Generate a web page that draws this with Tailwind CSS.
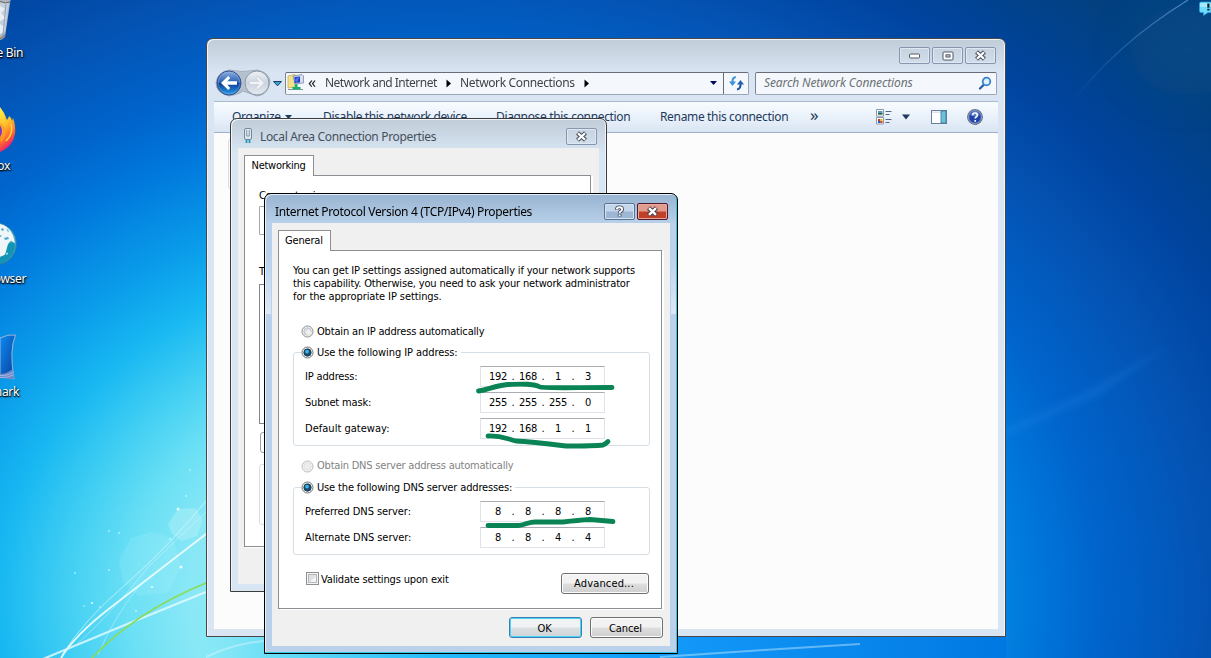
<!DOCTYPE html>
<html lang="en">
<head>
<meta charset="utf-8">
<title>Network Connections</title>
<script src="https://cdn.jsdelivr.net/npm/@tailwindcss/browser@4"></script>
</head>
<body class="overflow-hidden">
<div class="relative w-[1211px] h-[658px] overflow-hidden font-['Noto_Sans','Open_Sans',sans-serif] text-[12px] tracking-[-0.34px] text-black whitespace-nowrap">

  <!-- wallpaper -->
  <svg class="absolute inset-0" width="1211" height="658" viewBox="0 0 1211 658">
    <defs>
      <radialGradient id="sky" gradientUnits="userSpaceOnUse" cx="0" cy="0" r="800" gradientTransform="translate(430 600) scale(1.25 1)">
        <stop offset="0" stop-color="#9ceef8"/><stop offset=".24" stop-color="#8ae8f6"/><stop offset=".3" stop-color="#6ce0f5"/>
        <stop offset=".36" stop-color="#44d0f3"/><stop offset=".43" stop-color="#18b8f2"/><stop offset=".5" stop-color="#0a9cea"/>
        <stop offset=".6" stop-color="#0078dc"/><stop offset=".67" stop-color="#0064cc"/><stop offset=".785" stop-color="#0452b2"/>
        <stop offset=".87" stop-color="#0044a0"/><stop offset="1" stop-color="#024080"/>
      </radialGradient>
      <linearGradient id="floor" x1="0" x2="1"><stop offset="0" stop-color="#78e4f6" stop-opacity="0"/><stop offset=".08" stop-color="#6fdff6"/><stop offset=".3" stop-color="#24baf9"/><stop offset=".6" stop-color="#1298f8"/><stop offset="1" stop-color="#0078e2"/></linearGradient>
      <linearGradient id="beam" x1="0" y1="1" x2="1" y2="0"><stop offset="0" stop-color="#4090e0" stop-opacity="0"/><stop offset="1" stop-color="#6aa4d8" stop-opacity=".7"/></linearGradient>
      <filter id="soft"><feGaussianBlur stdDeviation=".6"/></filter>
      <filter id="blur3"><feGaussianBlur stdDeviation="3"/></filter>
      <filter id="haze" x="-50%" y="-50%" width="200%" height="200%"><feGaussianBlur stdDeviation="18"/></filter>
    </defs>
    <rect width="1211" height="658" fill="url(#sky)"/>
    <rect x="200" y="637" width="806" height="21" fill="url(#floor)"/>
    <ellipse cx="1190" cy="50" rx="60" ry="45" fill="#0e5088" opacity=".5" filter="url(#haze)"/>
    <path d="M1070 105Q1115 45 1188 0" fill="none" stroke="url(#beam)" stroke-width="1.3" filter="url(#soft)"/>
    <path d="M1000 430L1080 394L1170 345L1100 395L1000 440Z" fill="#2c8ce8" opacity=".2" filter="url(#blur3)"/>
    <g fill="#d8fafc" opacity=".28" filter="url(#soft)"><path d="M168 524l10-15 17-1 8 12-6 16-15 5-10-7z"/><path d="M119 560l12-22 20-6 22 6 8 28-12 26-30 4-16-14z" opacity=".4"/></g>
    <g fill="none" stroke="#e6fbff" filter="url(#soft)">
      <path d="M61 658Q75 635 110 608L206 534" stroke-width="1.8"/>
      <path d="M62 655Q84 620 125 585Q170 545 206 501" opacity=".6"/>
      <path d="M76 645Q110 615 150 565L206 512" opacity=".4"/>
      <path d="M98 655Q112 620 140 585" opacity=".4"/>
      <path d="M43 659L120 627L206 592" stroke-width="2.2" opacity=".8"/>
      <path d="M206 657Q235 643 264 641" opacity=".4" stroke-width="2"/>
      <path d="M660 657Q760 650 860 644" opacity=".4" stroke-width="2"/>
    </g>
    <path d="M91 659Q135 612 206 583" fill="none" stroke="#88dc58" stroke-width="1.6"/>
    <g fill="#e8ffff"><circle cx="178" cy="509" r="1.5"/><circle cx="181" cy="567" r="1.5"/><circle cx="92" cy="603" r="1"/><circle cx="152" cy="587" r="1"/><circle cx="109" cy="531" r=".8"/><circle cx="119" cy="533" r=".8"/><circle cx="170" cy="539" r=".8"/><circle cx="75" cy="573" r=".8"/><circle cx="109" cy="570" r=".8"/><circle cx="136" cy="611" r=".8"/><circle cx="84" cy="606" r=".7"/><circle cx="100" cy="607" r=".7"/><circle cx="186" cy="496" r=".8"/><circle cx="190" cy="470" r=".7"/></g>
  </svg>

  <!-- desktop shortcuts -->
  <svg class="absolute left-0 top-0" width="40" height="400" viewBox="0 0 40 400">
    <defs>
      <linearGradient id="fx" x1="0" y1="0" x2=".3" y2="1"><stop offset="0" stop-color="#fff44a"/><stop offset=".45" stop-color="#ffc02c"/><stop offset=".75" stop-color="#ff6a30"/><stop offset="1" stop-color="#e81478"/></linearGradient>
      <linearGradient id="fin" x1="0" y1="0" x2="1" y2="1"><stop offset="0" stop-color="#0c8cf4"/><stop offset="1" stop-color="#0a3c98"/></linearGradient>
      <linearGradient id="globe" x1="0" y1="0" x2="0" y2="1"><stop offset="0" stop-color="#7ccce4"/><stop offset="1" stop-color="#1490b8"/></linearGradient>
    </defs>
    <path d="M0 0H10.500L5 37Q3 39.500 0 40Z" fill="#a9b6c4"/><path d="M0 2L9 3L5 32L0 35Z" fill="#c4d0dc"/><path d="M0 6l5 3-4 4 5 5-6 3zM0 24l5 3-3 6-2 1z" fill="#e8eef4"/><path d="M6 4L3 35" stroke="#8fa4b8" fill="none"/><path d="M0 1.500Q6 4 10 2" stroke="#706458" fill="none"/><path d="M0 38.500Q3 38 5 35" stroke="#8c7c6c" fill="none" stroke-width="1.500"/>
    <path d="M0 107Q5 113 7 120Q9 117 9 116Q12 118 12 121L13 118Q16 126 15 134Q13 147 0 152Z" fill="url(#fx)"/><path d="M0 125Q4 131 0 137Z" fill="#7838c8"/><path d="M0 124Q8 131 1 141" stroke="#ffa020" fill="none" stroke-width="2"/><path d="M11 124Q14 133 6 141" stroke="#ffd83c" fill="none" stroke-width="1.500"/>
    <path d="M0 223.500A21 21 0 0 1 0 264.500Z" fill="url(#globe)"/><path d="M0 223.500Q12 227 15 243L11 241L8 244L11 249L8 252L3 256L0 257Z" fill="#eef6f8"/><path d="M1 229l2-1 1 2-2 1zM4 238l4-1 1 2-4 1zM6 228l3 3-1 1zM9 242l3-1-1 3zM0 235l2 1-2 1z" fill="#48a8c8"/><path d="M8 244Q14 240 15 245Q14 256 4 262L0 263V257L5 255Z" fill="#1494b4"/><path d="M7 252l1 2-2 1z" fill="#eef6f8"/><path d="M0 223.500A21 21 0 0 1 0 264.500" fill="none" stroke="#30789c" stroke-width=".8"/>
    <path d="M0 338Q8 334 15.500 335Q9 350 14 379Q5 377 0 377Z" fill="url(#fin)" stroke="#9cb4d8"/><path d="M0 374Q7 374 12.500 369L14 379L0 378Z" fill="#7088c8"/><path d="M0 375.500Q8 376 13 372M0 377.500Q8 378 13 375" stroke="#c4d4f4" fill="none" stroke-width=".6"/>
  </svg>
  <div class="absolute left-0 top-0 w-[40px] h-[400px] text-white [text-shadow:1px_1px_2px_#000,0_1px_1px_#000]">
    <div class="absolute right-[17px] top-[45px] leading-[16px]">Recycle Bin</div>
    <div class="absolute right-[30px] top-[158px] leading-[16px]">Firefox</div>
    <div class="absolute right-[14px] top-[271px] leading-[16px]">Browser</div>
    <div class="absolute right-[21px] top-[384px] leading-[16px]">Wireshark</div>
  </div>
  <svg class="absolute left-[1198px] top-0" width="13" height="17" viewBox="0 0 13 17"><path d="M1.500 3.500Q1.500 2 3 2H13V12.500H10L5.500 15.500V12.500H3Q1.500 12.500 1.500 11Z" fill="#6fdcfc" stroke="#2ca0e0" stroke-width=".7"/><path d="M2 3H13V7H2Z" fill="#c0f4ff" opacity=".6"/><path d="M9.300 3.500h2.200v4.200h-2.200zM9.300 8.800h2.200v1.800h-2.200z" fill="#102028"/></svg>

  <!-- explorer window -->
  <div class="absolute left-[206px] top-[38px] w-[800px] h-[599px] rounded-t-[7px] border border-[#484848] bg-[#d9e5f2] shadow-[inset_1px_1px_0_#f0f5fb,inset_-1px_0_0_#f0f5fb] px-[7px] pb-[7px] flex flex-col bg-linear-to-b from-[#c0cdd9] to-[#d9e5f2] to-[34px]">
    <div class="h-[31px] shrink-0 flex justify-end items-start pt-[8px] pr-[2px] gap-[2px]">
      <div class="w-[31px] h-[17px] border border-[#8795ae] rounded-[2px] shadow-[inset_0_0_0_1px_#dfe8f2] flex items-center justify-center"><svg width="13" height="7" viewBox="0 0 13 7"><rect x="1.500" y="2" width="10" height="4" rx="1" fill="#fff" stroke="#505868"/></svg></div>
      <div class="w-[31px] h-[17px] border border-[#8795ae] rounded-[2px] shadow-[inset_0_0_0_1px_#dfe8f2] flex items-center justify-center"><svg width="12" height="10" viewBox="0 0 12 10"><rect x="1" y="1" width="10" height="8" rx="1" fill="#fff" stroke="#505868"/><rect x="4" y="3.800" width="4" height="2.200" fill="#cdd8e4" stroke="#505868"/></svg></div>
      <div class="w-[31px] h-[17px] border border-[#8795ae] rounded-[2px] shadow-[inset_0_0_0_1px_#dfe8f2] flex items-center justify-center"><svg width="13" height="11" viewBox="0 0 13 11"><path d="M2.500 1.800L10.500 9.200M10.500 1.800L2.500 9.200" stroke="#505868" stroke-width="4.400"/><path d="M3 2.200L10 8.800M10 2.200L3 8.800" stroke="#fff" stroke-width="2.200"/></svg></div>
    </div>
    <div class="h-[31px] shrink-0 flex items-center">
      <svg class="shrink-0 -mt-[2px]" width="71" height="31" viewBox="0 0 71 31">
        <defs><linearGradient id="nb" x1="0" y1="0" x2="0" y2="1"><stop offset="0" stop-color="#8cb0e0"/><stop offset=".48" stop-color="#2c60b4"/><stop offset=".52" stop-color="#0c3c98"/><stop offset="1" stop-color="#28a0e8"/></linearGradient>
        <linearGradient id="nf" x1="0" y1="0" x2="0" y2="1"><stop offset="0" stop-color="#eef2f6"/><stop offset=".5" stop-color="#ccd4de"/><stop offset="1" stop-color="#e4eaf0"/></linearGradient></defs>
        <path d="M15 1Q29 4 43 1Q55 3 56 13Q54 26 43 27Q32 23 29 22Q26 25 15 27Q2 24 2 14Q3 3 15 1Z" fill="#b4c0ce" stroke="#98a4b4" stroke-width=".8"/>
        <circle cx="15" cy="14" r="12" fill="url(#nb)" stroke="#34508c"/><circle cx="15" cy="14" r="10.800" fill="none" stroke="#9cc0e8" stroke-opacity=".5" stroke-width=".8"/>
        <path d="M7 14L14.200 7L16.200 9L13.400 12.200H23V15.800H13.400L16.200 19L14.200 21Z" fill="#fff"/>
        <circle cx="43" cy="14" r="12" fill="url(#nf)" stroke="#8c98a8"/>
        <path d="M50.500 14L43.500 7.300L41.800 9L44.600 12.300H35.500V15.700H44.600L41.800 19L43.500 20.700Z" fill="#f0f3f7" stroke="#bcc5cf" stroke-width=".6"/>
        <path d="M59.500 12.500H67.500L63.500 16.800Z" fill="#30a8d0" stroke="#1c3c74"/>
      </svg>
      <div class="flex items-center w-[464px] h-[23px] -mt-[5px] border border-[#9aa6b4] border-t-[#686c78] border-l-[#7c8490] rounded-[2px] bg-[#f4f8fc] text-[#404448] tracking-[-0.52px]">
        <svg class="shrink-0 ml-[1px] -mt-[2px]" width="18" height="18" viewBox="0 0 18 18"><path d="M1 3L8 1.500V14L1 15Z" fill="#f4e08c" stroke="#c4a848" stroke-width=".7"/><path d="M6 3L15 1.500L16.500 3V10L8 11Z" fill="#d8dce8" stroke="#7080a8" stroke-width=".7"/><path d="M7.500 4L13 3.500V9.500L7.500 10Z" fill="#1c3cc8"/><path d="M8 8Q8 4.500 12.500 4L10 9.500Z" fill="#4c74ec"/><path d="M1 16.500H16" stroke="#8c9498"/><path d="M8 11h2.500v3h3v2.500h-8V14H8z" fill="#14b070"/></svg>
        <span class="ml-[3px] w-[17px] text-[16px] leading-[16px] -mt-[3px] text-[#202428]">«</span>
        <span class="w-[112px]">Network and Internet</span>
        <svg class="mx-[8px] shrink-0" width="7" height="9" viewBox="0 0 7 9"><path d="M1.500 .5L6 4.500L1.500 8.500Z" fill="#000"/></svg>
        <span class="w-[115px] tracking-[-0.36px]">Network Connections</span>
        <svg class="mx-[8px] shrink-0" width="7" height="9" viewBox="0 0 7 9"><path d="M1.500 .5L6 4.500L1.500 8.500Z" fill="#000"/></svg>
        <svg class="ml-auto mr-[5px]" width="9" height="6" viewBox="0 0 9 6"><path d="M1 1H8L4.500 5Z" fill="#000860"/></svg>
        <div class="w-[25px] h-[21px] border-l border-[#686c78] flex items-center justify-center"><svg width="17" height="16" viewBox="0 0 17 16"><path d="M7.800 2Q4 2.500 4.500 8" fill="none" stroke="#3c94dc" stroke-width="2"/><path d="M1 6.500H8L4.500 11Z" fill="#3c90d8"/><path d="M9 14.500Q13 14 12.500 8" fill="none" stroke="#1c54a4" stroke-width="2"/><path d="M9 9.500H16L12.500 5Z" fill="#2060b4"/></svg></div>
      </div>
      <div class="ml-[6px] flex items-center justify-between w-[242px] h-[23px] -mt-[5px] pl-[8px] pr-[4px] border border-[#9aa6b4] border-t-[#686c78] border-l-[#7c8490] rounded-[2px] bg-[#f4f8fc] text-[#6c7074] italic tracking-[-0.12px]">
        <span>Search Network Connections</span>
        <svg width="14" height="14" viewBox="0 0 14 14"><path d="M6 8.500L2 12.500" stroke="#2858a8" stroke-width="2.200" stroke-linecap="round"/><circle cx="8.500" cy="5.500" r="3.800" fill="#e0f0fc" stroke="#3884cc" stroke-width="1.800"/></svg>
      </div>
    </div>
    <div class="h-[32px] shrink-0 border-t border-b border-t-[#a8bace] border-b-[#a0b0c6] bg-linear-to-b from-[#f8fcfe] via-[#e9f1fa] to-[#dae5f3] flex items-center text-[#1e395b] pl-[18px]">
      <span class="w-[48px] tracking-[-0.3px]">Organize</span>
      <svg class="ml-[4px]" width="10" height="6" viewBox="0 0 10 6"><path d="M1 1H8L4.500 5Z" fill="#1e395b"/></svg>
      <span class="ml-[29px] w-[144px] tracking-[-0.36px]">Disable this network device</span>
      <span class="ml-[29px] w-[134px]">Diagnose this connection</span>
      <span class="ml-[30px] w-[128px]">Rename this connection</span>
      <span class="ml-[22px] w-[10px] text-[17px] leading-[16px] -mt-[4px]">»</span>
      <svg class="ml-[55px]" width="19" height="18" viewBox="0 0 19 18"><path d="M1.500 1.500H8.500V8.200H1.500ZM1.500 9.500H8.500V16H1.500Z" fill="#fff" stroke="#8c98a8"/><path d="M3 3h4.500v3.500H3z" fill="#5c94c4"/><path d="M3 5h4.500v1.500H3z" fill="#2c6444"/><path d="M3 11h2.200v2H3zM5.200 13h2.300v2H5.200z" fill="#d83c28"/><path d="M5.200 11h2.300v2H5.200z" fill="#e8b820"/><path d="M3 13h2.200v2H3z" fill="#2858d0"/><path d="M10.500 3.500H16.500M10.500 6.500H14.500M10.500 11.500H16.500M10.500 14.500H14.500" stroke="#58687c"/></svg>
      <svg class="ml-[7px]" width="10" height="6" viewBox="0 0 10 6"><path d="M1 .5H9L5 5.500Z" fill="#1e395b"/></svg>
      <svg class="ml-[19px]" width="18" height="16" viewBox="0 0 18 16"><rect x="1.500" y="1.500" width="15" height="13" fill="#fff" stroke="#6880a0"/><path d="M2 2.500H11V4H2Z" fill="#dce4ee"/><rect x="11" y="2" width="5" height="12" fill="#6cc0d8" stroke="#3878a0" stroke-width=".8"/></svg>
      <svg class="ml-[18px]" width="18" height="18" viewBox="0 0 18 18"><circle cx="9" cy="9" r="7.300" fill="#2044a8" stroke="#6c7484" stroke-width="1.300"/><circle cx="9" cy="9" r="6.400" fill="none" stroke="#b8c8e4" stroke-width=".7"/><path d="M4 7Q6 3 9 3Q12 3 14 7Q9 9.500 4 7Z" fill="#7090dc" opacity=".7"/><path d="M6.600 7.200Q6.700 5 9 5Q11.400 5 11.400 7Q11.400 8.200 10 9Q9.200 9.600 9.200 10.600M9.200 12V13.700" fill="none" stroke="#fff" stroke-width="1.700"/></svg>
    </div>
    <div class="flex-1 bg-[#fcfcfc] pt-[6px] pl-[14px]"><div class="w-[200px] h-[50px] border border-[#dcdcdc] rounded-[3px]"></div></div>
  </div>

  <!-- adapter properties dialog -->
  <div class="absolute left-[230px] top-[118px] w-[377px] h-[474px] rounded-t-[7px] border border-[#3c3c3c] shadow-[inset_1px_1px_0_#eef4fa,inset_-1px_0_0_#eef4fa] bg-linear-to-b from-[#c0cdd9] to-[#d8e5f2] to-[34px] px-[7px] pb-[7px] flex flex-col">
    <div class="h-[29px] shrink-0 flex items-center text-[#46505c]">
      <svg class="ml-[4px] mt-[4px]" width="12" height="18" viewBox="0 0 12 18"><rect x="2.500" y="1.500" width="7" height="11" rx="1.500" fill="#dce8f0" stroke="#788898"/><path d="M4.700 3V9M7.300 3V9M4.700 9H7.300" stroke="#8898a8" fill="none"/><path d="M4.500 12.500V16M7.500 12.500V16" stroke="#2894b4" stroke-width="1.800"/></svg>
      <span class="ml-[6px] mt-[7px] tracking-[-0.34px]">Local Area Connection Properties</span>
      <div class="ml-auto mr-[2px] mt-[6px] w-[31px] h-[17px] border border-[#8795ae] rounded-[2px] shadow-[inset_0_0_0_1px_#dfe8f2] flex items-center justify-center"><svg width="13" height="11" viewBox="0 0 13 11"><path d="M2.500 1.800L10.500 9.200M10.500 1.800L2.500 9.200" stroke="#505868" stroke-width="4.400"/><path d="M3 2.200L10 8.800M10 2.200L3 8.800" stroke="#fff" stroke-width="2.200"/></svg></div>
    </div>
    <div class="flex-1 bg-[#f0f0f0] pl-[6px] pt-[7px] font-['DejaVu_Sans_Condensed','Noto_Sans',sans-serif] text-[11px] tracking-[-0.17px]">
      <div class="relative z-10 w-[70px] h-[21px] border border-b-0 border-[#8c8e94] bg-white flex items-center pl-[6.500px] tracking-[-0.25px]">Networking</div>
      <div class="-mt-px w-[347px] h-[372px] border border-[#8c8e94] bg-white shadow-[2px_1px_0_#fff] pl-[14px] pt-[13px]">
        <div class="h-[14px] leading-[14px]">Connect using:</div>
        <div class="mt-[3px] w-[316px] h-[29px] border border-[#a8a8ac] rounded-[1px]"></div>
        <div class="mt-[30px] h-[14px] leading-[14px]">This connection uses the following items:</div>
        <div class="mt-[5px] w-[316px] h-[140px] border border-[#828790]"></div>
        <div class="mt-[8px] ml-[1px] w-[99px] h-[21px] border border-[#a0a0a4] rounded-[3px]"></div>
        <div class="mt-[11px] w-[316px] h-[61px] border border-[#d5dfe5] rounded-[3px]"></div>
      </div>
    </div>
  </div>

  <!-- TCP/IPv4 properties dialog -->
  <div class="absolute left-[264px] top-[193px] w-[414px] h-[461px] rounded-t-[7px] border border-black bg-[#b9d1ea] shadow-[inset_-1px_-1px_0_#34c8e4,inset_1px_1px_0_#e4f0fa] flex flex-col px-[7px] pb-[7px] bg-linear-to-b from-[#98b3d0] to-[#b9d1ea] to-[30px]">
    <div class="absolute left-px top-[60px] w-[5px] h-[60px] bg-linear-to-b from-transparent to-[#dce8f6]"></div>
    <div class="absolute right-px top-[60px] w-[5px] h-[60px] bg-linear-to-b from-transparent to-[#dce8f6]"></div>
    <div class="h-[29px] shrink-0 flex items-center pl-[3px]">
      <span class="mt-[7px] tracking-[-0.33px]">Internet Protocol Version 4 (TCP/IPv4) Properties</span>
      <div class="ml-auto mt-[6px] w-[31px] h-[17px] border border-[#5c7494] rounded-[2px] shadow-[inset_0_0_0_1px_#d4e2f2] bg-linear-to-b from-[#c4d6ea] from-45% to-[#9cb6d4] to-55% flex items-center justify-center"><svg width="11" height="13" viewBox="0 0 11 13"><path d="M2.800 4.700Q2.800 2.300 5.500 2.300Q8.200 2.300 8.200 4.400Q8.200 5.600 6.500 6.500Q5.600 7 5.600 8.300M5.600 9.200V11.600" fill="none" stroke="#40485c" stroke-width="3.600"/><path d="M2.800 4.400Q2.900 2.300 5.500 2.300Q8.200 2.300 8.200 4.400Q8.200 5.600 6.500 6.500Q5.600 7 5.600 8M5.600 9.500V11.200" fill="none" stroke="#fff" stroke-width="1.900"/></svg></div>
      <div class="ml-[2px] mr-[2px] mt-[6px] w-[31px] h-[17px] border border-[#50182c] rounded-[2px] shadow-[inset_0_0_0_1px_#e8a89c] bg-linear-to-b from-[#e09c8c] from-45% to-[#c04028] to-55% flex items-center justify-center"><svg width="13" height="11" viewBox="0 0 13 11"><path d="M2.500 1.800L10.500 9.200M10.500 1.800L2.500 9.200" stroke="#4c3c48" stroke-width="4.400"/><path d="M3 2.200L10 8.800M10 2.200L3 8.800" stroke="#fff" stroke-width="2.400"/></svg></div>
    </div>
    <div class="flex-1 bg-[#f0f0f0] px-[6px] pt-[7px] font-['DejaVu_Sans_Condensed','Noto_Sans',sans-serif] text-[11px] tracking-[-0.17px]">
      <div class="relative z-10 w-[53px] h-[21px] border border-b-0 border-[#8c8e94] bg-white flex items-center pl-[6px]">General</div>
      <div class="-mt-px w-[384px] h-[359px] border border-[#8c8e94] bg-white shadow-[2px_1px_0_#fff] pl-[14px] pt-[13px]">
        <p class="leading-[13px]">You can get IP settings assigned automatically if your network supports<br><span class="tracking-[-0.17px]">this capability. Otherwise, you need to ask your network administrator</span><br><span class="tracking-[-0.09px]">for the appropriate IP settings.</span></p>

        <div class="mt-[21px] h-[14px] pl-[8px] flex items-center gap-[3px]">
          <svg width="13" height="13" viewBox="0 0 13 13"><circle cx="6.500" cy="6.500" r="5.500" fill="#f4f4f4" stroke="#8c8e90"/><circle cx="6.500" cy="6.500" r="3.700" fill="#dcdee0" stroke="#b8bcc0" stroke-width=".8"/><circle cx="7.500" cy="7.500" r="2.500" fill="#f0f0f0"/></svg>
          <span class="pt-[2px]">Obtain an IP address automatically</span>
        </div>
        <fieldset class="mt-[7px] w-[357px] h-[101px] border border-[#d5dfe5] rounded-[3px] pl-[11px]">
          <legend class="-ml-[4px] h-[14px] flex items-center gap-[3px] pr-[3px]">
            <svg width="13" height="13" viewBox="0 0 13 13"><circle cx="6.500" cy="6.500" r="5.500" fill="#f4f4f4" stroke="#707478"/><circle cx="6.500" cy="6.500" r="3.700" fill="#184c70" stroke="#18384c" stroke-width=".8"/><circle cx="6" cy="5.600" r="1.900" fill="#40b4e4"/></svg>
            <span class="pt-[2px] tracking-[-0.08px]">Use the following IP address:</span>
          </legend>
          <div class="mt-[6px] flex items-center h-[22px]"><span class="w-[175px] pt-[2px]">IP address:</span><div class="w-[125px] h-[21px] border border-[#e2e3ea] border-t-[#abadb3] flex items-center pt-[2px] pl-[4px] text-center tracking-[-0.3px]"><span class="w-[26px]">192</span><span class="w-[4px]">.</span><span class="w-[26px]">168</span><span class="w-[4px]">.</span><span class="w-[26px]">1</span><span class="w-[4px]">.</span><span class="w-[26px]">3</span></div></div>
          <div class="mt-[4px] flex items-center h-[22px]"><span class="w-[175px] pt-[2px]">Subnet mask:</span><div class="w-[125px] h-[21px] border border-[#e2e3ea] border-t-[#abadb3] flex items-center pt-[2px] pl-[4px] text-center tracking-[-0.3px]"><span class="w-[26px]">255</span><span class="w-[4px]">.</span><span class="w-[26px]">255</span><span class="w-[4px]">.</span><span class="w-[26px]">255</span><span class="w-[4px]">.</span><span class="w-[26px]">0</span></div></div>
          <div class="mt-[4px] flex items-center h-[22px]"><span class="w-[175px] pt-[2px] tracking-[0.02px]">Default gateway:</span><div class="w-[125px] h-[21px] border border-[#e2e3ea] border-t-[#abadb3] flex items-center pt-[2px] pl-[4px] text-center tracking-[-0.3px]"><span class="w-[26px]">192</span><span class="w-[4px]">.</span><span class="w-[26px]">168</span><span class="w-[4px]">.</span><span class="w-[26px]">1</span><span class="w-[4px]">.</span><span class="w-[26px]">1</span></div></div>
        </fieldset>

        <div class="mt-[13px] h-[14px] pl-[8px] flex items-center gap-[3px] text-[#838383]">
          <svg width="13" height="13" viewBox="0 0 13 13"><circle cx="6.500" cy="6.500" r="5.500" fill="#f6f6f6" stroke="#b8babc"/><circle cx="6.500" cy="6.500" r="3.700" fill="#ececec" stroke="#dcdee0" stroke-width=".8"/></svg>
          <span class="tracking-[-0.21px]">Obtain DNS server address automatically</span>
        </div>
        <fieldset class="mt-[7px] w-[357px] h-[75px] border border-[#d5dfe5] rounded-[3px] pl-[11px]">
          <legend class="-ml-[4px] h-[14px] flex items-center gap-[3px] pr-[3px]">
            <svg width="13" height="13" viewBox="0 0 13 13"><circle cx="6.500" cy="6.500" r="5.500" fill="#f4f4f4" stroke="#707478"/><circle cx="6.500" cy="6.500" r="3.700" fill="#184c70" stroke="#18384c" stroke-width=".8"/><circle cx="6" cy="5.600" r="1.900" fill="#40b4e4"/></svg>
            <span class="pt-[2px] tracking-[-0.15px]">Use the following DNS server addresses:</span>
          </legend>
          <div class="mt-[6px] flex items-center h-[22px]"><span class="w-[175px] pt-[2px] tracking-[-0.07px]">Preferred DNS server:</span><div class="w-[125px] h-[21px] border border-[#e2e3ea] border-t-[#abadb3] flex items-center pt-[2px] pl-[4px] text-center"><span class="w-[26px]">8</span><span class="w-[4px]">.</span><span class="w-[26px]">8</span><span class="w-[4px]">.</span><span class="w-[26px]">8</span><span class="w-[4px]">.</span><span class="w-[26px]">8</span></div></div>
          <div class="mt-[4px] flex items-center h-[22px]"><span class="w-[175px] pt-[2px] tracking-[-0.07px]">Alternate DNS server:</span><div class="w-[125px] h-[21px] border border-[#e2e3ea] border-t-[#abadb3] flex items-center pt-[2px] pl-[4px] text-center"><span class="w-[26px]">8</span><span class="w-[4px]">.</span><span class="w-[26px]">8</span><span class="w-[4px]">.</span><span class="w-[26px]">4</span><span class="w-[4px]">.</span><span class="w-[26px]">4</span></div></div>
        </fieldset>

        <div class="mt-[18px] pl-[13px] flex items-start">
          <svg class="-mt-px" width="13" height="13" viewBox="0 0 13 13"><rect x=".5" y=".5" width="12" height="12" fill="#f4f4f4" stroke="#8e8f8f"/><rect x="2.500" y="2.500" width="8" height="8" fill="#dfe1e4" stroke="#b4b8bc"/><path d="M10 4V10H4Z" fill="#f4f4f4"/></svg>
          <span class="ml-[2px] leading-[14px] tracking-[-0.16px]">Validate settings upon exit</span>
          <div class="ml-auto mr-[12px] w-[88px] h-[21px] border border-[#707070] rounded-[3px] shadow-[inset_0_0_0_1px_#fcfcfc] bg-linear-to-b from-[#f2f2f2] from-45% via-[#dddddd] via-55% to-[#cfcfcf] flex items-center justify-center pt-[2px] pr-[2px] tracking-[0.15px]">Advanced...</div>
        </div>
      </div>
      <div class="mt-[8px] mr-px flex justify-end gap-[8px] tracking-[-0.1px]">
        <div class="w-[73px] h-[21px] border border-[#3c7fb1] rounded-[3px] shadow-[inset_0_0_0_1px_#48d4f8] bg-linear-to-b from-[#f0f2f3] from-45% via-[#dadfe1] via-55% to-[#cfd4d6] flex items-center justify-center pt-[3px] pr-[2px]">OK</div>
        <div class="w-[73px] h-[21px] border border-[#707070] rounded-[3px] shadow-[inset_0_0_0_1px_#fcfcfc] bg-linear-to-b from-[#f2f2f2] from-45% via-[#dddddd] via-55% to-[#cfcfcf] flex items-center justify-center pt-[3px] pr-[2px]">Cancel</div>
      </div>
    </div>
  </div>

  <!-- marker strokes -->
  <svg class="absolute left-[470px] top-[375px]" width="150" height="155" viewBox="470 375 150 155" fill="none" stroke="#0a8455" stroke-width="4.800" stroke-linecap="round" stroke-linejoin="round">
    <path d="M478.500 391C489 389.500 495 385.500 508 384.500C521 384 533 383 540 387C548 388.500 575 387.500 612 387.500"/>
    <path d="M488 436C502 435.500 507 439 516 441C530 441.500 550 444 566 446C580 446 595 446 603 445Q605.500 444 608 441.500"/>
    <path d="M488 525.500H519C527 524 529 522 535 522H563C575 520.500 580 520 590 519.500L613 521.500"/>
  </svg>
</div>
</body>
</html>
